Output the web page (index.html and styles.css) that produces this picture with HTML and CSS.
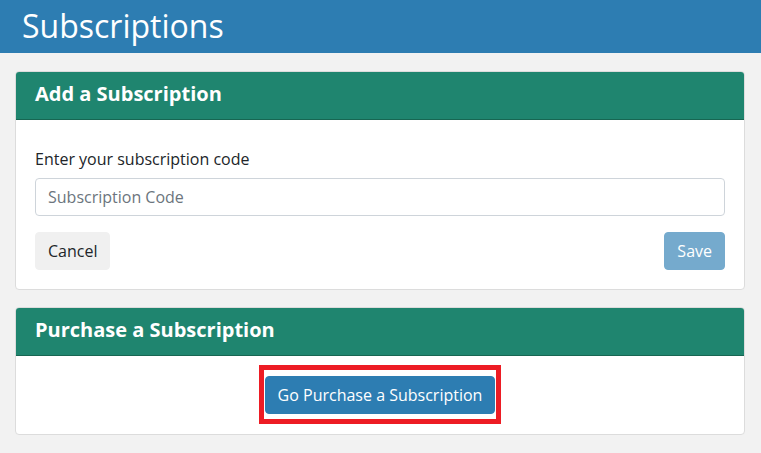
FILE: index.html
```html
<!DOCTYPE html>
<html lang="en">
<head>
    <meta charset="UTF-8">
    <meta name="viewport" content="width=device-width, initial-scale=1.0">
    <title>Subscriptions</title>
    <link rel="stylesheet" href="styles.css">
</head>
<body>

    <header class="page-header">
        <h1>Subscriptions</h1>
    </header>

    <main class="page-content">
        <section class="card">
            <h2 class="card-header">Add a Subscription</h2>
            <div class="card-body">
                <label class="field-label" for="code">Enter your subscription code</label>
                <input class="field-input" id="code" type="text" placeholder="Subscription Code">
                <div class="button-row">
                    <button class="btn btn-light">Cancel</button>
                    <button class="btn btn-primary btn-disabled">Save</button>
                </div>
            </div>
        </section>

        <section class="card">
            <h2 class="card-header">Purchase a Subscription</h2>
            <div class="card-body card-body-center">
                <span class="highlight">
                    <button class="btn btn-primary">Go Purchase a Subscription</button>
                </span>
            </div>
        </section>
    </main>

</body>
</html>
```

FILE: styles.css
```css
body {
    margin: 0;
    font-family: "Open Sans", "Liberation Sans", sans-serif;
    background-color: #f2f2f2;
    color: #212529;
}

.page-header {
    background-color: #2d7db2;
    color: white;
    padding: 6px 22px 8px;
    height: 39px;
}

.page-header h1 {
    margin: 0;
    font-size: 32px;
    font-weight: 400;
    line-height: 39px;
}

.page-content {
    padding: 18px 16px 18px 15px;
}

.card {
    background: white;
    border: 1px solid #dcdcdc;
    border-radius: 4px;
    margin-bottom: 17px;
    overflow: hidden;
}

.card-header {
    margin: 0;
    background-color: #1f856f;
    border-bottom: 1px solid #176652;
    color: white;
    font-size: 20px;
    font-weight: 700;
    line-height: 24px;
    padding: 10px 19px 13px;
}

.card-body {
    padding: 27px 19px 19px;
}

.card-body-center {
    padding: 9px 19px 10px;
    text-align: center;
}

.field-label {
    display: block;
    font-size: 16px;
    line-height: 24px;
    margin-bottom: 7px;
}

.field-input {
    display: block;
    box-sizing: border-box;
    width: 100%;
    height: 38px;
    padding: 6px 12px;
    border: 1px solid #ced4da;
    border-radius: 4px;
    font-family: inherit;
    font-size: 16px;
    color: #495057;
}

.field-input::placeholder {
    color: #6c757d;
}

.button-row {
    display: flex;
    justify-content: space-between;
    margin-top: 16px;
}

.btn {
    font-family: inherit;
    font-size: 16px;
    line-height: 24px;
    padding: 6px 12px;
    border: 1px solid transparent;
    border-radius: 4px;
    cursor: pointer;
}

.btn-light {
    background-color: #f0f0f0;
    border-color: #f0f0f0;
    color: #212529;
}

.btn-primary {
    background-color: #2d7db2;
    border-color: #2d7db2;
    color: white;
}

.btn-disabled {
    background-color: #75aacd;
    border-color: #75aacd;
    cursor: default;
}

.highlight {
    display: inline-flex;
    vertical-align: top;
    border: 5px solid #ed1c24;
    padding: 6px 1px 5px;
}
```
